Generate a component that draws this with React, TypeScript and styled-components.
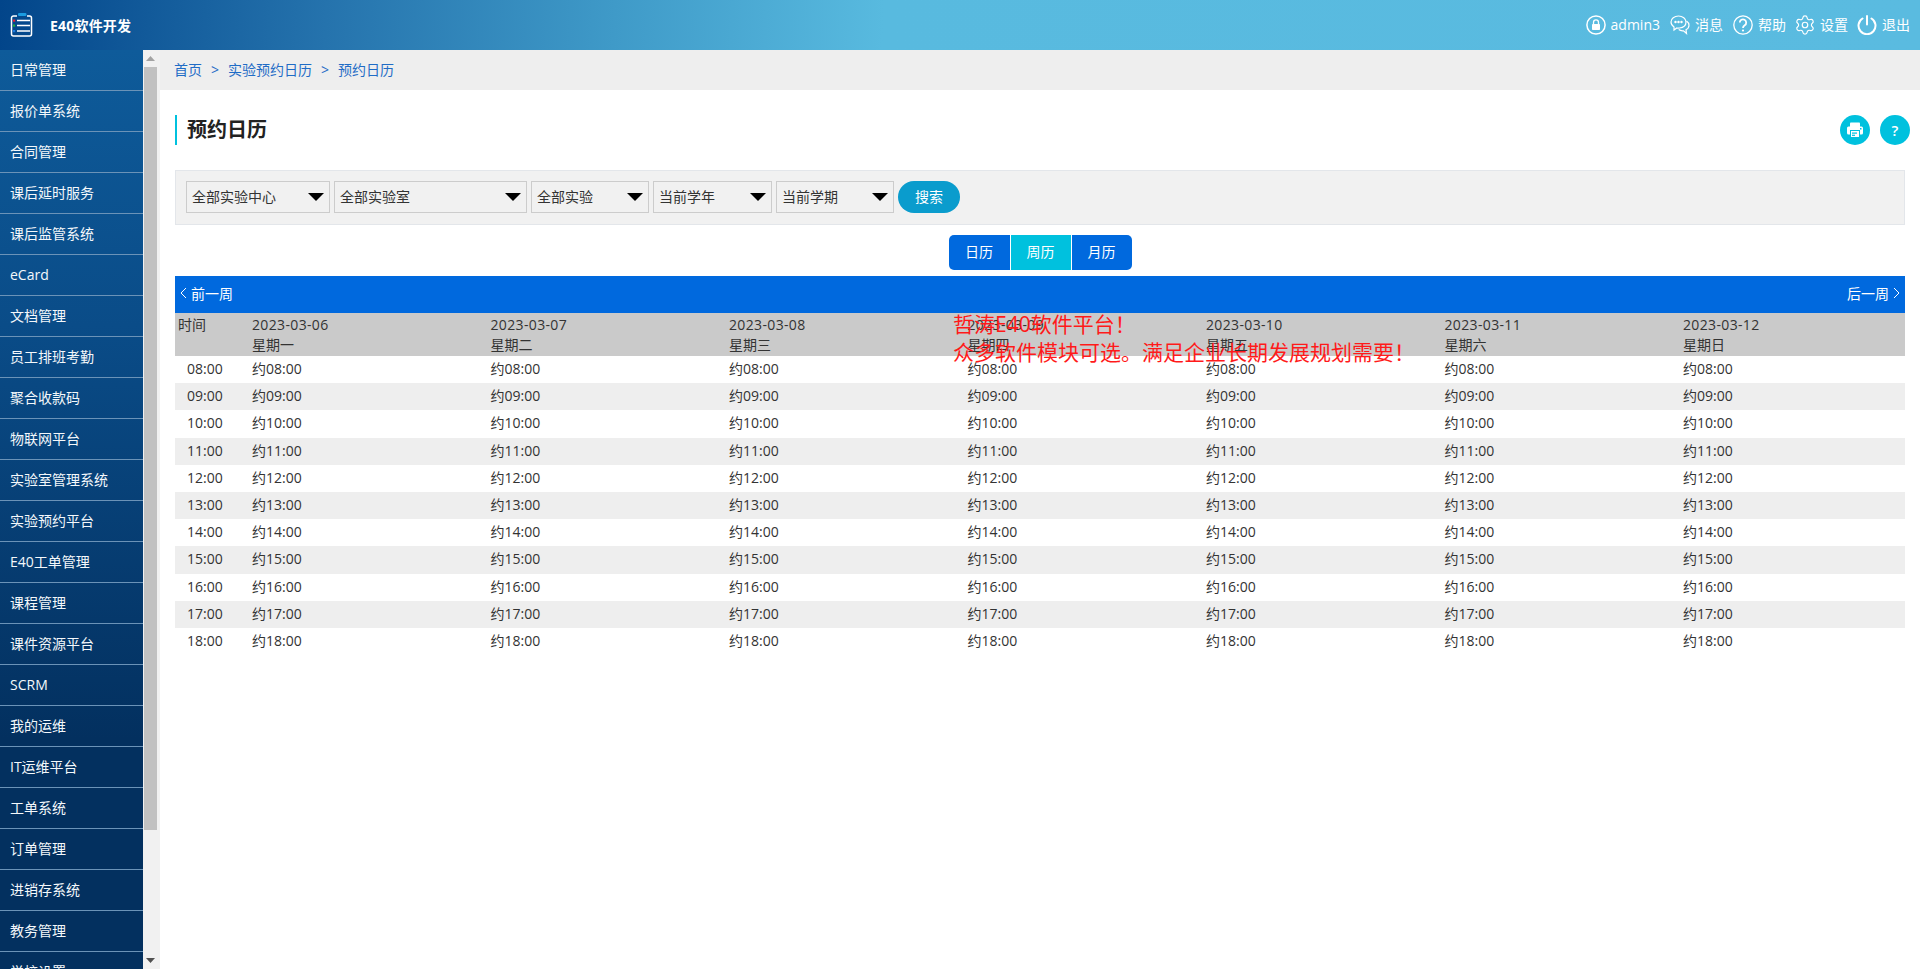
import React from 'react';
import styled, { createGlobalStyle } from 'styled-components';
import { Settings } from 'lucide-react';

const GlobalStyle = createGlobalStyle`
html, body {
  margin: 0;
  padding: 0;
  height: 100%;
  overflow: hidden;
  background: #fff;
  font-family: "Open Sans", "Noto Sans CJK SC", sans-serif;
  font-size: 14px;
  color: #333;
}
* { box-sizing: border-box; }
`;

const Page = styled.div`
position: relative;
width: 1920px;
height: 969px;
display: flex;
flex-direction: column;
overflow: hidden;
`;

const Header = styled.header`
flex: none;
height: 50px;
display: flex;
align-items: center;
justify-content: space-between;
padding: 0 10px;
color: #fff;
background: linear-gradient(92deg, #02458a 0%, #2573ad 17%, #3f9ac8 32%, #58badf 46%, #5abbe0 100%);
`;

const Brand = styled.div`
display: flex;
align-items: center;
gap: 16px;
font-size: 14px;
font-weight: 700;
letter-spacing: 0.2px;
`;

const UserBar = styled.div`
display: flex;
align-items: center;
`;

const UserItem = styled.div<{ $gap: number }>`
display: flex;
align-items: center;
gap: 5px;
margin-left: ${p => p.$gap}px;
font-size: 14px;
line-height: 20px;
`;

const GearIcon = styled(Settings)`
margin: 0 -1px;
`;

const Body = styled.div`
flex: 1;
display: flex;
min-height: 0;
`;

const Sidebar = styled.nav`
flex: none;
width: 143px;
overflow: hidden;
background: linear-gradient(180deg, #0e5b9a 0%, #0a4c88 30%, #03305f 75%, #03305f 100%);
`;

const NavItem = styled.div`
height: 41px;
line-height: 39px;
padding-left: 10px;
color: #f4f8fb;
font-size: 14px;
border-bottom: 1px solid #6b93b8;
white-space: nowrap;
`;

const ScrollTrack = styled.div`
flex: none;
width: 17px;
display: flex;
flex-direction: column;
align-items: center;
padding-right: 2px;
background: #f1f1f1;
`;

const ScrollArrow = styled.div<{ $down?: boolean }>`
flex: none;
height: 17px;
display: flex;
align-items: center;
justify-content: center;
color: ${p => (p.$down ? '#505050' : '#a3a3a3')};
`;

const ScrollThumb = styled.div`
flex: none;
width: 13px;
height: 763px;
background: #c1c1c1;
`;

const ScrollGap = styled.div`
flex: 1;
`;

const Main = styled.main`
flex: 1;
min-width: 0;
display: flex;
flex-direction: column;
`;

const Breadcrumb = styled.div`
flex: none;
height: 40px;
display: flex;
align-items: center;
padding: 0 0 2px 14px;
background: #eee;
font-size: 14px;
color: #1f6cc6;
`;

const CrumbSep = styled.span`
margin: 0 9px;
`;

const Content = styled.div`
flex: 1;
padding: 25px 15px 0 15px;
`;

const TitleRow = styled.div`
height: 30px;
display: flex;
align-items: center;
justify-content: space-between;
`;

const Title = styled.h1`
margin: 0;
height: 30px;
padding-left: 10px;
border-left: 2px solid #00c1de;
font-size: 20px;
font-weight: 700;
line-height: 30px;
color: #222;
`;

const RoundButtons = styled.div`
display: flex;
gap: 10px;
margin-right: -5px;
`;

const RoundButton = styled.div`
width: 30px;
height: 30px;
border-radius: 50%;
display: flex;
align-items: center;
justify-content: center;
background: #00c1de;
color: #fff;
font-size: 15px;
font-weight: 600;
`;

const FilterPanel = styled.div`
margin-top: 25px;
height: 55px;
display: flex;
align-items: flex-start;
gap: 4px;
padding: 10px 0 0 10px;
background: #f1f1f1;
border: 1px solid #e3e6ea;
`;

const FilterSelect = styled.div<{ $width: number }>`
width: ${p => p.$width}px;
height: 32px;
display: flex;
align-items: center;
justify-content: space-between;
padding: 0 5px;
line-height: 28px;
background: #f1f1f1;
border: 1px solid #ccc;
font-size: 14px;
color: #333;
`;

const Caret = styled.i`
width: 0;
height: 0;
border-left: 8px solid transparent;
border-right: 8px solid transparent;
border-top: 8px solid #000;
`;

const SearchButton = styled.div`
width: 62px;
height: 32px;
border-radius: 16px;
background: #0a9ccd;
color: #fff;
font-size: 14px;
line-height: 31px;
text-align: center;
`;

const ViewTabs = styled.div`
margin-top: 10px;
display: flex;
justify-content: center;
`;

const ViewTab = styled.div<{ $active?: boolean }>`
width: 61px;
height: 35px;
line-height: 33px;
text-align: center;
color: #fff;
font-size: 14px;
background: ${p => (p.$active ? '#00c1de' : '#0069de')};
border-left: 1px solid #fff;
&:first-child {
  border-left: 0;
  border-radius: 5px 0 0 5px;
}
&:last-child {
  border-radius: 0 5px 5px 0;
}
`;

const WeekBar = styled.div`
margin-top: 6px;
height: 37px;
display: flex;
align-items: center;
justify-content: space-between;
padding: 0 5px 3px;
background: #0069de;
color: #fff;
font-size: 14px;
`;

const WeekLink = styled.span`
display: flex;
align-items: center;
gap: 4px;
`;

const DayHead = styled.div`
height: 43px;
display: grid;
grid-template-columns: 77px repeat(6, 238.5px) 1fr;
padding-top: 2px;
background: #cacaca;
line-height: 20px;
color: #333;
`;

const TimeHead = styled.div`
padding-left: 3px;
`;

const DayDate = styled.div`
letter-spacing: 0.35px;
`;

const Row = styled.div<{ $odd: boolean }>`
height: 27.2px;
display: grid;
grid-template-columns: 77px repeat(6, 238.5px) 1fr;
line-height: 25.6px;
background: ${p => (p.$odd ? '#eee' : '#fff')};
color: #333;
`;

const TimeCell = styled.div`
padding-left: 12px;
`;

const Notice = styled.div`
position: absolute;
left: 953px;
top: 310px;
font-size: 21px;
line-height: 28px;
color: #ff1a1a;
white-space: nowrap;
`;

const navItems = ['日常管理', '报价单系统', '合同管理', '课后延时服务', '课后监管系统', 'eCard', '文档管理', '员工排班考勤', '聚合收款码', '物联网平台', '实验室管理系统', '实验预约平台', 'E40工单管理', '课程管理', '课件资源平台', 'SCRM', '我的运维', 'IT运维平台', '工单系统', '订单管理', '进销存系统', '教务管理', '学校设置'];
const filters = [
  { label: '全部实验中心', width: 144 },
  { label: '全部实验室', width: 193 },
  { label: '全部实验', width: 118 },
  { label: '当前学年', width: 119 },
  { label: '当前学期', width: 118 },
];
const days = [
  { date: '2023-03-06', name: '星期一' },
  { date: '2023-03-07', name: '星期二' },
  { date: '2023-03-08', name: '星期三' },
  { date: '2023-03-09', name: '星期四' },
  { date: '2023-03-10', name: '星期五' },
  { date: '2023-03-11', name: '星期六' },
  { date: '2023-03-12', name: '星期日' },
];
const hours = ['08:00', '09:00', '10:00', '11:00', '12:00', '13:00', '14:00', '15:00', '16:00', '17:00', '18:00'];

const LogoIcon = () => (
  <svg width="24" height="24" viewBox="0 0 24 24" fill="none">
    <path d="M7 3H3.500a2 2 0 0 0-2 2v16a2 2 0 0 0 2 2h16a2 2 0 0 0 2-2V5a2 2 0 0 0-2-2H17" stroke="#fff" strokeWidth="1.500" />
    <rect x="8" y="0" width="8.500" height="3" rx="1.200" fill="#1b9be0" />
    <rect x="3" y="6.500" width="2.200" height="2.200" fill="#e0203a" />
    <rect x="3" y="11.500" width="2.200" height="2.200" fill="#20b040" />
    <rect x="3" y="17" width="2.200" height="2.200" fill="#1b7be0" />
    <path d="M7 7.500h13M7 12.500h13M7 18h13" stroke="#fff" strokeWidth="1.600" />
  </svg>
);

const LockIcon = () => (
  <svg width="20" height="20" viewBox="0 0 20 20" fill="none">
    <circle cx="10" cy="10" r="9.100" stroke="#fff" strokeWidth="1.500" />
    <path d="M7.500 9V7.400a2.500 2.500 0 0 1 5 0V9" stroke="#fff" strokeWidth="1.300" />
    <rect x="6" y="9" width="8" height="6" rx="0.800" fill="#fff" />
  </svg>
);

const ChatIcon = () => (
  <svg width="20" height="20" viewBox="0 0 20 20" fill="none" stroke="#fff" strokeWidth="1.200">
    <path d="M8.500 1C4.400 1 1 3.600 1 7c0 2 1.200 3.800 3 4.900V15l2.800-2c.8.2 1.700.2 2.700 0 4-.4 6.500-2.900 6.500-6S12.600 1 8.500 1z" />
    <path d="M16.500 6c1.500 1 2.500 2.500 2.500 4.200 0 2-1.200 3.600-3 4.500l.5 3.800-3-2.700c-1.700.2-3.500-.2-4.800-1.200" />
    <circle cx="5.500" cy="7" r=".6" fill="#fff" />
    <circle cx="8.500" cy="7" r=".6" fill="#fff" />
    <circle cx="11.500" cy="7" r=".6" fill="#fff" />
  </svg>
);

const HelpIcon = () => (
  <svg width="20" height="20" viewBox="0 0 20 20" fill="none" stroke="#fff">
    <circle cx="10" cy="10" r="9.200" strokeWidth="1.300" />
    <path d="M6.800 7.600a3.200 3.200 0 1 1 4.900 2.700c-1.100.7-1.700 1.200-1.700 2.700" strokeWidth="1.800" />
    <circle cx="10" cy="15.500" r="1.100" fill="#fff" stroke="none" />
  </svg>
);

const PowerIcon = () => (
  <svg width="20" height="20" viewBox="0 0 20 20" fill="none" stroke="#fff" strokeLinecap="round">
    <path d="M5.500 3.500a8.500 8.500 0 1 0 9 0" strokeWidth="2" />
    <path d="M10 1v8.500" strokeWidth="2" />
  </svg>
);

const PrintIcon = () => (
  <svg width="16" height="16" viewBox="0 0 16 16">
    <rect x="3" y="0.500" width="10" height="5" rx="0.800" fill="#fff" />
    <rect x="0" y="4.500" width="16" height="8" rx="1.500" fill="#fff" />
    <rect x="13" y="6" width="1.500" height="1.500" fill="#00c1de" />
    <rect x="3.500" y="8.500" width="9" height="7" fill="#fff" stroke="#00c1de" />
    <rect x="5" y="10.500" width="5" height="1.200" fill="#00c1de" />
    <rect x="5" y="12.700" width="3" height="1.200" fill="#00c1de" />
  </svg>
);

const Triangle = ({ down }: { down?: boolean }) => (
  <svg width="9" height="5" viewBox="0 0 9 5" fill="currentColor">
    <path d={down ? 'M0 0h9L4.500 5z' : 'M4.500 0L9 5H0z'} />
  </svg>
);

const Chevron = ({ right }: { right?: boolean }) => (
  <svg width="7" height="12" viewBox="0 0 7 12" fill="none" stroke="#fff" strokeWidth="1">
    <path d={right ? 'M1 1l5 5-5 5' : 'M6 1L1 6l5 5'} />
  </svg>
);

const App: React.FC = () => {
  return (
    <Page>
      <GlobalStyle />
      <Header>
        <Brand>
          <LogoIcon />
          <span>E40软件开发</span>
        </Brand>
        <UserBar>
          <UserItem $gap={0}><LockIcon />admin3</UserItem>
          <UserItem $gap={10}><ChatIcon />消息</UserItem>
          <UserItem $gap={10}><HelpIcon />帮助</UserItem>
          <UserItem $gap={9}><GearIcon size={22} strokeWidth={1.3} />设置</UserItem>
          <UserItem $gap={9}><PowerIcon />退出</UserItem>
        </UserBar>
      </Header>
      <Body>
        <Sidebar>
          {navItems.map(item => <NavItem key={item}>{item}</NavItem>)}
        </Sidebar>
        <ScrollTrack>
          <ScrollArrow><Triangle /></ScrollArrow>
          <ScrollThumb />
          <ScrollGap />
          <ScrollArrow $down><Triangle down /></ScrollArrow>
        </ScrollTrack>
        <Main>
          <Breadcrumb>
            首页<CrumbSep>&gt;</CrumbSep>实验预约日历<CrumbSep>&gt;</CrumbSep>预约日历
          </Breadcrumb>
          <Content>
            <TitleRow>
              <Title>预约日历</Title>
              <RoundButtons>
                <RoundButton><PrintIcon /></RoundButton>
                <RoundButton>?</RoundButton>
              </RoundButtons>
            </TitleRow>
            <FilterPanel>
              {filters.map(f => (
                <FilterSelect key={f.label} $width={f.width}>
                  {f.label}
                  <Caret />
                </FilterSelect>
              ))}
              <SearchButton>搜索</SearchButton>
            </FilterPanel>
            <ViewTabs>
              <ViewTab>日历</ViewTab>
              <ViewTab $active>周历</ViewTab>
              <ViewTab>月历</ViewTab>
            </ViewTabs>
            <WeekBar>
              <WeekLink><Chevron />前一周</WeekLink>
              <WeekLink>后一周<Chevron right /></WeekLink>
            </WeekBar>
            <DayHead>
              <TimeHead>时间</TimeHead>
              {days.map(d => (
                <div key={d.date}>
                  <DayDate>{d.date}</DayDate>
                  {d.name}
                </div>
              ))}
            </DayHead>
            {hours.map((h, i) => (
              <Row key={h} $odd={i % 2 === 1}>
                <TimeCell>{h}</TimeCell>
                {days.map(d => <div key={d.date}>约{h}</div>)}
              </Row>
            ))}
          </Content>
        </Main>
      </Body>
      <Notice>
        哲涛E40软件平台！<br />众多软件模块可选。满足企业长期发展规划需要！
      </Notice>
    </Page>
  );
};

export default App;
